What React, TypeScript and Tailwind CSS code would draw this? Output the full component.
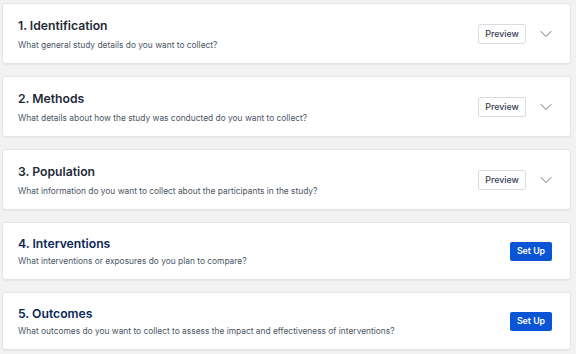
import { ChevronDown } from "lucide-react";

type Section = {
  title: string;
  description: string;
  configured: boolean;
};

const sections: Section[] = [
  { title: "1. Identification", description: "What general study details do you want to collect?", configured: true },
  { title: "2. Methods", description: "What details about how the study was conducted do you want to collect?", configured: true },
  { title: "3. Population", description: "What information do you want to collect about the participants in the study?", configured: true },
  { title: "4. Interventions", description: "What interventions or exposures do you plan to compare?", configured: false },
  { title: "5. Outcomes", description: "What outcomes do you want to collect to assess the impact and effectiveness of interventions?", configured: false },
];

function SectionCard({ section }: { section: Section }) {
  return (
    <div
      className={`flex items-center justify-between rounded-[3px] border border-[#e3e5ea] bg-white pl-[15px] pr-[18px] shadow-[0_1px_1px_rgba(0,0,0,0.04)] ${
        section.configured ? "h-[61px]" : "h-[58px]"
      }`}
    >
      <div
        className={`flex flex-col self-start ${
          section.configured ? "gap-[6px] pt-[14px]" : "gap-[4px] pt-[13px]"
        }`}
      >
        <h3
          className={`text-[12.2px] font-semibold leading-[16px] ${
            section.configured ? "text-[#1f2a37]" : "text-[#0b2659]"
          }`}
        >
          {section.title}
        </h3>
        <p className="text-[8.4px] leading-[11px] text-[#4b5563]">{section.description}</p>
      </div>
      {section.configured ? (
        <div className="-mr-[4px] flex items-center gap-[10px]">
          <button className="h-[20px] w-[48px] rounded-[2px] border border-[#d9dce1] bg-white text-[8.8px] font-medium text-[#374151]">
            Preview
          </button>
          <ChevronDown className="h-[20px] w-[20px] text-[#6b7280]" strokeWidth={1.2} />
        </div>
      ) : (
        <button className="h-[19px] w-[42px] rounded-[2px] bg-[#0a55d6] text-[8.8px] font-semibold text-white">
          Set Up
        </button>
      )}
    </div>
  );
}

export default function App() {
  return (
    <div
      className="min-h-[354px] w-[576px] bg-[#f2f2f3] pl-[2px] pr-[5px] pt-[3px]"
      style={{ fontFamily: "Inter, 'Noto Sans', sans-serif" }}
    >
      <div className="flex flex-col gap-[12px]">
        {sections.map((s) => (
          <SectionCard key={s.title} section={s} />
        ))}
      </div>
    </div>
  );
}
